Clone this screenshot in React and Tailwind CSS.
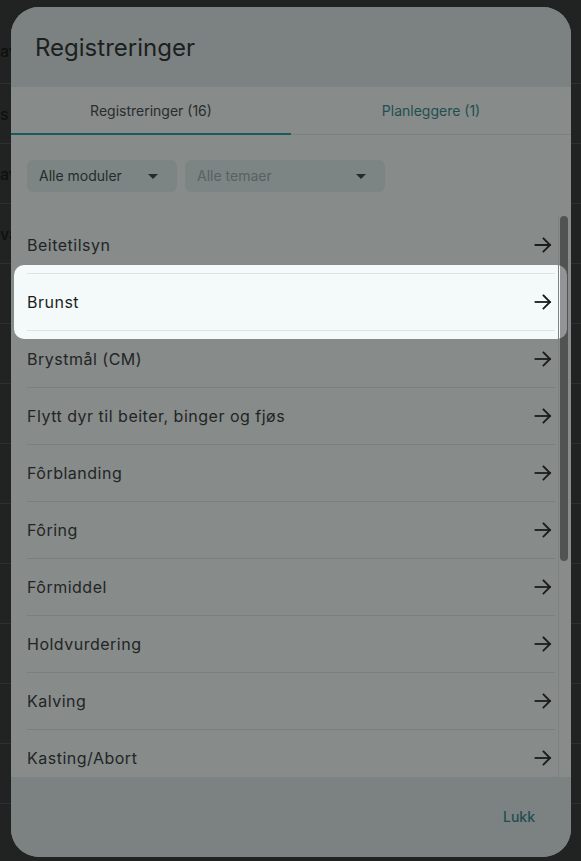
import React from "react";

const ITEMS = [
	"Beitetilsyn",
	"Brunst",
	"Brystmål (CM)",
	"Flytt dyr til beiter, binger og fjøs",
	"Fôrblanding",
	"Fôring",
	"Fôrmiddel",
	"Holdvurdering",
	"Kalving",
	"Kasting/Abort",
];

const BG_ROWS = ["av", "s", "av", "va", "", "", "", "", "", "", "", "", "", ""];

const Arrow = ({ className }) => (
	<svg viewBox="0 0 24 24" className={className} fill="none" stroke="currentColor" strokeWidth="1.8" strokeLinecap="square">
		<path d="M4.5 12h14.5" />
		<path d="M12.5 5.5 19 12l-6.5 6.5" />
	</svg>
);

const Caret = () => (
	<svg viewBox="0 0 10 5" className="w-[10px] h-[5px] text-[#262a2a]" fill="currentColor">
		<path d="M0 0h10L5 5z" />
	</svg>
);

const Row = ({ label, first, spot }) => (
	<li className={`flex items-center justify-between h-[57px] ${spot ? "relative" : ""} ${first ? "" : "border-t border-[#7b7f7e]"}`}>
		{
			spot ?
				<div className="absolute -top-[9px] -bottom-[9px] -left-[13px] -right-[12px] flex flex-col justify-between rounded-[10px] bg-[#f4f9f9]">
					<div className="mt-[8px] ml-[13px] mr-[12px] border-t border-[#dce3e3]" />
					<div className="mb-[8px] ml-[13px] mr-[12px] border-b border-[#dce3e3]" />
				</div>
			:
				null
		}
		<span className={`relative text-base font-normal tracking-[0.5px] ${spot ? "text-[#1b1e1e]" : "text-[#222525]"}`}>{ label }</span>
		<Arrow className={`relative w-6 h-6 ${spot ? "text-[#191c1c]" : "text-[#1b1d1d]"}`} />
	</li>
);

export default function App() {
	return (
		<div className="relative w-[581px] h-[861px] overflow-hidden bg-[#212323] font-['Inter',sans-serif]">

			<div className="flex flex-col">
				{
					BG_ROWS.map((t, i) => (
						<div key={ i } className={`flex items-center border-b border-[#2e3030] text-base font-medium text-[#0e0f0f] ${i === 0 ? "h-[84px] pt-[18px]" : "h-[60px]"}`}>
							{ t }
						</div>
					))
				}
			</div>

			<div className="absolute left-[11px] top-[7px] w-[560px] h-[850px] flex flex-col rounded-[28px] overflow-hidden bg-[#878b8a]">

				<header className="flex items-center h-[80px] px-6 pt-px bg-[#7c8181]">
					<h2 className="text-2xl font-normal text-[#1c1f1f]">Registreringer</h2>
				</header>

				<nav className="flex h-[48px] border-b border-[#7c807f]">
					<button className="relative flex-1 flex items-center justify-center text-sm text-[#2a2d2d]">
						Registreringer (16)
						<span className="absolute left-0 right-0 -bottom-px h-[2px] bg-[#1d5a5a]" />
					</button>
					<button className="flex-1 flex items-center justify-center text-sm text-[#1e4f50]">
						Planleggere (1)
					</button>
				</nav>

				<div className="flex gap-2 mt-[25px] px-4">
					<div className="flex items-center justify-between w-[150px] h-8 pl-3 pr-[19px] rounded-md bg-[#7c8584] text-sm text-[#272b2b]">
						Alle moduler <Caret />
					</div>
					<div className="flex items-center justify-between w-[200px] h-8 pl-3 pr-[19px] rounded-md bg-[#7c8584] text-sm text-[#596060]">
						Alle temaer <Caret />
					</div>
				</div>

				<div className="relative flex-1 mt-6 overflow-hidden">
					<ul className="flex flex-col px-4">
						{
							ITEMS.map((label, i) => (
								<Row key={ label } label={ label } first={ i === 0 } spot={ label === "Brunst" } />
							))
						}
					</ul>
					<div className="absolute top-0 bottom-0 right-[1px] w-[12px] border-l border-[#7e8282]">
						<div className="ml-[1px] w-2 h-[345px] rounded-full bg-black/40" />
					</div>
				</div>

				<footer className="flex items-center justify-end h-[80px] px-6 bg-[#7c8181]">
					<button className="px-3 text-sm font-medium text-[#1e4f50]">Lukk</button>
				</footer>

			</div>

		</div>
	);
}
